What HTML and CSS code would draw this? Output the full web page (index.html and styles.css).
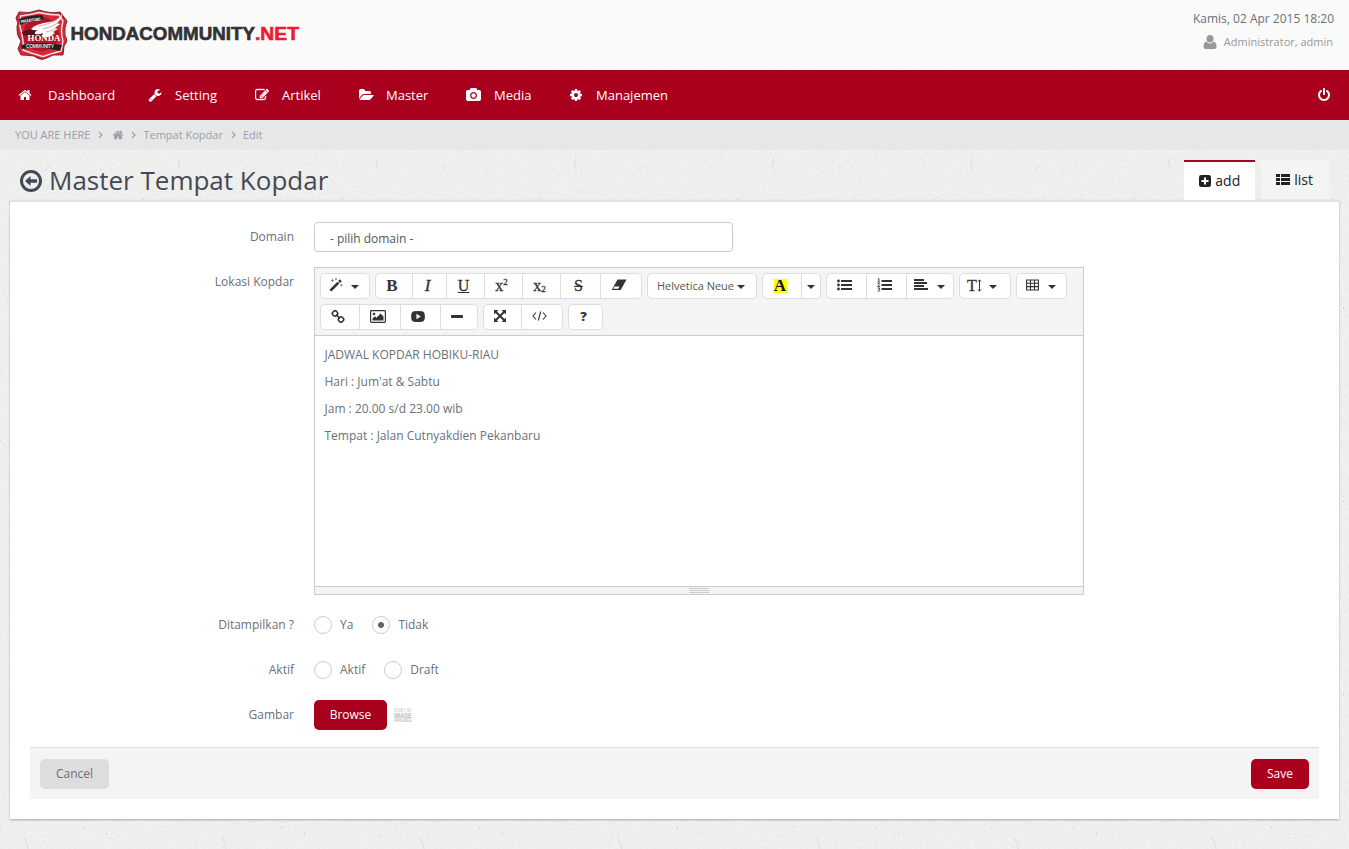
FILE: index.html
```
<!DOCTYPE html>
<html lang="id">
<head>
<meta charset="utf-8">
<title>Master Tempat Kopdar</title>
<link rel="stylesheet" href="styles.css">
</head>
<body>
<svg class="defs" width="0" height="0" aria-hidden="true">
  <symbol id="home" viewBox="0 0 1792 1792"><path d="M1472 992v480q0 26-19 45t-45 19h-384v-384h-256v384h-384q-26 0-45-19t-19-45v-480q0-1 .5-3t.5-3l575-474 575 474q1 2 1 6zm223-69l-62 74q-8 9-21 11h-3q-13 0-21-7l-692-577-692 577q-12 8-24 7-13-2-21-11l-62-74q-8-10-7-23.5t11-21.5l719-599q32-26 76-26t76 26l244 204v-195q0-14 9-23t23-9h192q14 0 23 9t9 23v408l219 182q10 8 11 21.5t-7 23.5z"/></symbol>
  <symbol id="wrench" viewBox="0 0 1792 1792"><path d="M448 1472q0-26-19-45t-45-19-45 19-19 45 19 45 45 19 45-19 19-45zm644-420l-682 682q-37 37-90 37-52 0-91-37l-106-108q-38-36-38-90 0-53 38-91l681-681q39 98 114.5 173.5t173.5 114.5zm634-435q0 39-23 106-47 134-164.5 217.5t-258.5 83.5q-185 0-316.5-131.5t-131.5-316.5 131.5-316.5 316.5-131.5q58 0 121.5 16.5t107.5 46.5q16 11 16 28t-16 28l-293 169v224l193 107q5-3 79-48.5t135.5-81 70.5-35.5q15 0 23.5 10t8.5 25z"/></symbol>
  <symbol id="edit" viewBox="0 0 1792 1792"><path d="M888 1184l116-116-152-152-116 116v56h96v96h56zm440-720q-16-16-33 1l-350 350q-17 17-1 33t33-1l350-350q17-17 1-33zm80 594v190q0 119-84.5 203.5t-203.5 84.5h-832q-119 0-203.5-84.5t-84.5-203.5v-832q0-119 84.5-203.5t203.5-84.5h832q63 0 117 25 15 7 18 23 3 17-9 29l-49 49q-14 14-32 8-23-6-45-6h-832q-66 0-113 47t-47 113v832q0 66 47 113t113 47h832q66 0 113-47t47-113v-126q0-13 9-22l64-64q15-15 35-7t20 29zm-96-738l288 288-672 672h-288v-288zm444 132l-92 92-288-288 92-92q28-28 68-28t68 28l152 152q28 28 28 68t-28 68z"/></symbol>
  <symbol id="folder" viewBox="0 0 1920 1792"><path d="M1879 952q0 31-31 66l-336 396q-43 51-120.5 86.5t-143.5 35.5h-1088q-34 0-60.5-13t-26.5-43q0-31 31-66l336-396q43-51 120.5-86.5t143.5-35.5h1088q34 0 60.5 13t26.5 43zm-343-344v160h-832q-94 0-197 47.5t-164 119.5l-337 396-5 6q0-4-.5-12.5t-.5-12.5v-960q0-92 66-158t158-66h320q92 0 158 66t66 158v32h544q92 0 158 66t66 158z"/></symbol>
  <symbol id="camera" viewBox="0 0 1920 1792"><path d="M960 672q119 0 203.5 84.5t84.5 203.5-84.5 203.5-203.5 84.5-203.5-84.5-84.5-203.5 84.5-203.5 203.5-84.5zm704-416q106 0 181 75t75 181v896q0 106-75 181t-181 75h-1408q-106 0-181-75t-75-181v-896q0-106 75-181t181-75h224l51-136q19-49 69.5-84.5t103.5-35.5h512q53 0 103.5 35.5t69.5 84.5l51 136h224zm-704 1152q185 0 316.5-131.5t131.5-316.5-131.5-316.5-316.5-131.5-316.5 131.5-131.5 316.5 131.5 316.5 316.5 131.5z"/></symbol>
  <symbol id="gear" viewBox="0 0 1792 1792"><path d="M1152 896q0-106-75-181t-181-75-181 75-75 181 75 181 181 75 181-75 75-181zm512-109v222q0 12-8 23t-20 13l-185 28q-19 54-39 91 35 50 107 138 10 12 10 25t-9 23q-27 37-99 108t-94 71q-12 0-26-9l-138-108q-44 23-91 38-16 136-29 186-7 28-36 28h-222q-14 0-24.5-8.5t-11.5-21.5l-28-184q-49-16-90-37l-141 107q-10 9-25 9-14 0-25-11-126-114-165-168-7-10-7-23 0-12 8-23 15-21 51-66.5t54-70.5q-27-50-41-99l-183-27q-13-2-21-12.5t-8-23.5v-222q0-12 8-23t19-13l186-28q14-46 39-92-40-57-107-138-10-12-10-24 0-10 9-23 26-36 98.5-107.5t94.5-71.5q13 0 26 10l138 107q44-23 91-38 16-136 29-186 7-28 36-28h222q14 0 24.5 8.5t11.5 21.5l28 184q49 16 90 37l142-107q9-9 24-9 13 0 25 10 129 119 165 170 7 8 7 22 0 12-8 23-15 21-51 66.5t-54 70.5q26 50 41 98l183 28q13 2 21 12.5t8 23.5z"/></symbol>
  <symbol id="power" viewBox="0 0 1792 1792"><path d="M1664 896q0 156-61 298t-164 245-245 164-298 61-298-61-245-164-164-245-61-298q0-182 80.5-343t226.5-270q43-32 95.5-25t83.5 50q32 42 24.5 94.5t-49.5 84.5q-98 74-151.5 181t-53.5 228q0 104 40.5 198.5t109.5 163.5 163.5 109.5 198.5 40.5 198.5-40.5 163.5-109.5 109.5-163.5 40.5-198.5q0-121-53.5-228t-151.5-181q-42-32-49.5-84.5t24.5-94.5q31-43 84-50t95 25q146 109 226.5 270t80.5 343zm-640-768v640q0 52-38 90t-90 38-90-38-38-90v-640q0-52 38-90t90-38 90 38 38 90z"/></symbol>
  <symbol id="chev" viewBox="0 0 5 8"><path d="M1 1l3 3-3 3" fill="none" stroke="currentColor" stroke-width="1.1"/></symbol>
</svg>
<svg class="paper" aria-hidden="true">
  <filter id="grain" x="0" y="0" width="100%" height="100%">
    <feTurbulence type="fractalNoise" baseFrequency=".35" numOctaves="3" seed="4" stitchTiles="stitch"/>
    <feColorMatrix values="0 0 0 0 .45  0 0 0 0 .44  0 0 0 0 .42  .2 .1 0 0 -.125"/>
  </filter>
  <pattern id="fibres" width="198" height="193" patternUnits="userSpaceOnUse">
    <path d="M24 65q3 6 5 15M93 19l3-4M142 8l3-4M71 119l-5 6M180 158q-3 7 1 12M120 92l6-3M45 171l4-6M0 55h2M195 140l3 2" fill="none" stroke="#8b8984" stroke-opacity=".25" stroke-width=".7"/>
    <path d="M106 61h1v1h-1zM83 55h1v1h-1zM12 142h1v1h-1zM155 115h1v1h-1zM92 77h1v1h-1z" fill="#777" fill-opacity=".45"/>
  </pattern>
  <rect width="100%" height="100%" filter="url(#grain)"/>
  <rect width="100%" height="100%" fill="url(#fibres)"/>
</svg>

<header class="top">
  <svg class="logo" width="290" height="54" viewBox="0 0 290 54">
    <path d="M4 3Q14 5 24 1Q36 5 45 3L52 12Q49 18 50 27Q54 31 49 37L48 46L38 46Q33 49 27 50.500Q21 49 19 47Q11 46 6 46L3 40L6 32Q1 26 2 18Q4 14 1 9Z" fill="#d42a3b" stroke="#6d1621" stroke-width=".9"/>
    <path d="M5.500 7Q15 6 24 3.500Q35 6 44 6L48 12Q45 22 48 32L46 42Q35 45 28 47.500Q18 45 8 41Q9 30 5 18Z" fill="none" stroke="#fff" stroke-opacity=".85" stroke-width="1.400"/>
    <ellipse cx="26" cy="25" rx="18" ry="17" fill="#b21526"/>
    <ellipse cx="23" cy="24" rx="16" ry="4" fill="#54131c"/>
    <path d="M4 10Q15 6 27 6L29 10Q16 11 5 16Z" fill="#222"/>
    <text x="6" y="14" class="badge-sm" fill="#eee" textLength="20" transform="rotate(-8 6 14)">PROUD TO BE</text>
    <path d="M47 5Q43 12 34 13Q20 15 16 20Q19 22 23 21Q19 23 20 25Q24 26 28 24Q26 27 29 28Q34 29 40 24L38 23L43 20L40 19L45 15L42 14Q47 10 47 5Z" fill="#fff"/>
    <path d="M45 8Q37 15 24 17M43 14Q37 18 28 20M42 19Q38 22 31 23" fill="none" stroke="#c9858b" stroke-width=".7"/>
    <text x="12.500" y="31.500" class="badge-name" fill="#fff" textLength="33" lengthAdjust="spacingAndGlyphs">HONDA</text>
    <path d="M6 36Q26 32 47 36L45 42Q26 36 7 40Z" fill="#242021"/>
    <text x="11" y="39" class="badge-md" fill="#ddd" textLength="28">COMMUNITY</text>
    <text x="55.500" y="31" class="wordmark" fill="#333" stroke="#333" textLength="184.500" lengthAdjust="spacingAndGlyphs">HONDACOMMUNITY</text>
    <text x="240" y="31" class="wordmark" fill="#ee1c2e" stroke="#ee1c2e" textLength="44" lengthAdjust="spacingAndGlyphs">.NET</text>
  </svg>
  <div class="session">
    <div class="date">Kamis, 02 Apr 2015 18:20</div>
    <div class="user"><svg width="14" height="14" viewBox="0 0 14 14"><ellipse cx="7" cy="3.800" rx="3.500" ry="3.800"/><path d="M3.300 6.500Q5 8.500 7 8.500T10.700 6.500Q13.500 7 13.500 12Q13.300 14 11.500 14H2.500Q.700 14 .5 12Q.500 7 3.300 6.500Z"/></svg>Administrator, admin</div>
  </div>
</header>

<nav class="nav">
  <a class="n1"><svg class="fa"><use href="#home"/></svg>Dashboard</a>
  <a class="n2"><svg class="fa"><use href="#wrench"/></svg>Setting</a>
  <a class="n3"><svg class="fa bold-icon"><use href="#edit"/></svg>Artikel</a>
  <a class="n4"><svg class="fa wide"><use href="#folder"/></svg>Master</a>
  <a class="n5"><svg class="fa wide"><use href="#camera"/></svg>Media</a>
  <a class="n6"><svg class="fa"><use href="#gear"/></svg>Manajemen</a>
  <a class="logout"><svg class="fa"><use href="#power"/></svg></a>
</nav>

<div class="crumbs">
  <span>YOU ARE HERE</span><svg class="chev"><use href="#chev"/></svg><svg class="crumb-home"><use href="#home"/></svg><svg class="chev"><use href="#chev"/></svg><span>Tempat Kopdar</span><svg class="chev"><use href="#chev"/></svg><span>Edit</span>
</div>

<main>
  <div class="heading">
    <svg width="22" height="22" viewBox="0 0 22 22"><circle cx="11" cy="11" r="9.500" fill="none" stroke="currentColor" stroke-width="3"/><path d="M5 11l5.500-5v3.200H17v3.600h-6.500V16z" fill="currentColor"/></svg>
    <h1>Master Tempat Kopdar</h1>
    <div class="tabs">
      <a class="tab active"><svg width="12" height="12" viewBox="0 0 12 12"><rect width="12" height="12" rx="2.300"/><path d="M6 2.500v7M2.500 6h7" stroke="#fff" stroke-width="2"/></svg>add</a>
      <a class="tab"><svg width="14" height="11" viewBox="0 0 14 11"><path d="M0 0h4v3H0zM5 0h9v3H5zM0 4h4v3H0zM5 4h9v3H5zM0 8h4v3H0zM5 8h9v3H5z"/></svg>list</a>
    </div>
  </div>

  <section class="panel">
    <div class="row"><label>Domain</label><div class="select">- pilih domain -</div></div>
    <div class="row">
      <label>Lokasi Kopdar</label>
      <div class="editor">
        <div class="toolbar">
          <div class="group">
            <b style="width:48px"><svg width="14" height="14" viewBox="0 0 14 14"><path d="M.5 11.700L8.500 3.700l1.900 1.900-8 8zM9.200 3l1.700-1.700 1.900 1.900-1.700 1.700z"/><path d="M3.500 1v3M2 2.500h3M7 0v2M6 1h2M12.500 6v2.500M11.200 7.200h2.600" stroke="#777" stroke-width=".8"/></svg><i class="caret"></i></b>
          </div>
          <div class="group">
            <b class="serif bold" style="width:36px">B</b><b class="serif ital" style="width:33px">I</b><b class="serif under" style="width:37px">U</b><b class="serif" style="width:37px">x<sup>2</sup></b><b class="serif" style="width:37px">x<sub>2</sub></b><b class="serif strike" style="width:39px">S</b><b style="width:40px"><svg width="16" height="12" viewBox="0 0 16 12"><path d="M6.500.500h9l-5.800 10.500h-9z"/><path d="M3.500 7.500h5L7.300 9.800H2.200z" fill="#fff"/></svg></b>
          </div>
          <div class="group"><b class="fontname" style="width:108px">Helvetica Neue<i class="caret"></i></b></div>
          <div class="group">
            <b class="serif bold" style="width:38px"><span class="mark">A</span></b><b class="narrow" style="width:18px"><i class="caret"></i></b>
          </div>
          <div class="group">
            <b style="width:39px"><svg width="15" height="12" viewBox="0 0 15 12"><path d="M4 1h11v2H4zM4 5h11v2H4zM4 9h11v2H4z"/><circle cx="1.500" cy="2" r="1.400"/><circle cx="1.500" cy="6" r="1.400"/><circle cx="1.500" cy="10" r="1.400"/></svg></b>
            <b style="width:39px"><svg width="15" height="14" viewBox="0 0 15 14"><path d="M4.500 2H15v2H4.500zM4.500 6H15v2H4.500zM4.500 10H15v2H4.500z"/><path d="M.8 1.200L1.900.6v3.200M.6 4h2.500M.6 5.600q2-.8 2 .6L.7 8.400h2.400M.6 10h2.200L1.700 11.300q1.300.1 1.100 1.200-.5 1-2.200.5" fill="none" stroke="currentColor" stroke-width=".9"/></svg></b>
            <b class="duo" style="width:46px"><svg width="14" height="12" viewBox="0 0 14 12"><path d="M0 0h10v2H0zM0 3h13v2H0zM0 6h10v2H0zM0 9h14v2H0z"/></svg><i class="caret"></i></b>
          </div>
          <div class="group"><b class="serif height" style="width:50px">T<svg width="5" height="13" viewBox="0 0 5 13"><path d="M2.500 1v11M1 2.500L2.500.800 4 2.500M1 10.500l1.500 1.700L4 10.500" fill="none" stroke="currentColor"/></svg><i class="caret"></i></b></div>
          <div class="group"><b class="duo" style="width:49px"><svg width="13" height="12" viewBox="0 0 13 12"><path d="M.6 1h11.800v10H.6zM.6 4.300h11.800M.6 7.600h11.800M4.500 1v10M8.500 1v10" fill="none" stroke="currentColor" stroke-width="1.100"/></svg><i class="caret"></i></b></div>
          <div class="group">
            <b style="width:38px"><svg width="14" height="13" viewBox="0 0 14 13"><g fill="none" stroke="currentColor" stroke-width="1.600"><rect x="1.500" y="1" width="5" height="5" rx="2.200" transform="rotate(45 4 3.500)"/><rect x="7.500" y="7" width="5" height="5" rx="2.200" transform="rotate(45 10 9.500)"/><path d="M5 4.500l4 4"/></g></svg></b>
            <b style="width:40px"><svg width="16" height="13" viewBox="0 0 16 13"><rect x=".6" y=".6" width="14.800" height="11.800" rx=".8" fill="none" stroke="currentColor" stroke-width="1.200"/><circle cx="4" cy="4" r="1.300"/><path d="M2.500 10.500V8.500L5 6.300l1.500 1.500L10.500 3.500l3 3v4z"/></svg></b>
            <b style="width:39px"><svg width="14" height="11" viewBox="0 0 15 12"><path fill-rule="evenodd" d="M3 .300Q7.500-.2 12 .300 15 .500 15 6T12 11.700Q7.500 12.200 3 11.700 0 11.500 0 6T3 .300ZM5.800 3v6L10.500 6z"/></svg></b>
            <b style="width:36px"><svg width="12" height="3"><rect width="12" height="3" rx=".8"/></svg></b>
          </div>
          <div class="group">
            <b style="width:37px"><svg width="12" height="12" viewBox="0 0 12 12"><path d="M0 0h4.500L0 4.500zM12 0v4.500L7.500 0zM0 12V7.500L4.500 12zM12 12H7.500L12 7.500z"/><path d="M2 2l8 8M10 2l-8 8" stroke="currentColor" stroke-width="2"/></svg></b>
            <b style="width:40px"><svg width="15" height="10" viewBox="0 0 15 10"><path d="M4 1.500L1 5l3 3.500M11 1.500L14 5l-3 3.500M8.700.500L6.300 9.500" fill="none" stroke="currentColor" stroke-width="1.100"/></svg></b>
          </div>
          <div class="group"><b class="help" style="width:29px">?</b></div>
        </div>
        <div class="content"><p>JADWAL KOPDAR HOBIKU-RIAU</p><p>Hari : Jum'at &amp; Sabtu</p><p>Jam : 20.00 s/d 23.00 wib</p><p>Tempat : Jalan Cutnyakdien Pekanbaru</p></div>
        <div class="resize"><span></span></div>
      </div>
    </div>
    <div class="row"><label>Ditampilkan ?</label><div class="radios"><i class="radio"></i><span class="opt">Ya</span><i class="radio on"></i><span class="opt">Tidak</span></div></div>
    <div class="row"><label>Aktif</label><div class="radios"><i class="radio"></i><span class="opt">Aktif</span><i class="radio"></i><span class="opt">Draft</span></div></div>
    <div class="row"><label>Gambar</label><a class="btn red browse">Browse</a>
      <svg class="thumb" width="20" height="18" viewBox="0 0 20 18"><text x="1" y="5.500" font-size="4.500" textLength="17.500" lengthAdjust="spacingAndGlyphs" opacity=".65">SORRY, NO</text><text x="1" y="11.500" font-size="7" textLength="17.500" lengthAdjust="spacingAndGlyphs">IMAGE</text><text x="1" y="15.800" font-size="4.500" textLength="17.500" lengthAdjust="spacingAndGlyphs">AVAILABLE</text></svg>
    </div>
    <div class="actions"><a class="btn grey">Cancel</a><a class="btn red save">Save</a></div>
  </section>
</main>
</body>
</html>
```

FILE: styles.css
```
* { box-sizing: border-box; }
body { margin: 0; height: 849px; overflow: hidden; position: relative; background: #f0f0ef; font: 12px/20px "Open Sans", sans-serif; color: #6b7079; }
svg { fill: currentColor; flex: none; display: block; }
.defs { position: absolute; }
.paper { position: absolute; inset: 0; width: 100%; height: 100%; z-index: -1; }

.top { height: 70px; display: flex; justify-content: space-between; padding: 9px 15px 0; background: rgba(255,255,255,.7); }
.wordmark { font: 900 18px "Liberation Sans", Arial, sans-serif; stroke-width: .6px; }
.badge-name { font: bold 8px "Liberation Serif", serif; }
.badge-sm { font: bold 4px "Liberation Sans", sans-serif; }
.badge-md { font: bold 5px "Liberation Sans", sans-serif; }
.session { text-align: right; }
.date { font-size: 12px; }
.user { display: flex; justify-content: flex-end; align-items: center; gap: 7px; margin: 3px 1px 0 0; font-size: 11px; color: #999; }

.nav { height: 50px; display: flex; align-items: center; padding: 0 0 1px 18px; background: #a9001d; box-shadow: inset 0 1px #9c0b22; color: #fff; font-size: 13px; }
.nav a { display: flex; align-items: center; }
.fa { width: 14px; height: 14px; margin-right: 16px; }
.fa.wide { width: 15px; }
.bold-icon { stroke: currentColor; stroke-width: 50; }
.n1 { width: 130px; }
.n2 { width: 107px; }
.n2 .fa { margin-right: 13px; }
.n3 { width: 104px; }
.n3 .fa, .n5 .fa { margin-right: 13px; }
.n4 { width: 107px; }
.n4 .fa { margin-right: 12px; }
.n5 { width: 103px; }
.n6 .fa { margin-right: 13px; }
.logout { margin-left: auto; }
.logout .fa { margin-right: 18px; }

.crumbs { height: 30px; display: flex; align-items: center; padding-left: 15px; background: #e7e7e7; color: #999ea8; font-size: 11px; }
.chev { width: 5px; height: 8px; margin: 0 7px 0 8px; }
.crumb-home { width: 12px; height: 12px; margin: 0 -2px 0 2px; }
.crumb-home + .chev { margin-left: 9px; }

.heading { height: 50px; display: flex; align-items: flex-start; padding: 0 10px 0 20px; color: #434a54; }
.heading > svg { margin-top: 20px; }
h1 { margin: 12px 0 0 7px; font-size: 26px; line-height: 36px; font-weight: 400; }
.tabs { display: flex; margin: 10px 10px 0 auto; gap: 6px; }
.tab { height: 39px; display: flex; align-items: center; gap: 4px; padding: 0 16px 0 15px; background: #f4f4f4; color: #222; font-size: 14px; }
.tab.active { height: 40px; padding-right: 15px; background: #fff; border-top: 2px solid #a9001d; }

.panel { margin: 0 10px; height: 619px; padding: 20px 20px 0; border-top: 2px solid #e2e2e2; background: #fff; box-shadow: 0 1px 2px rgba(0,0,0,.3); }
.row { display: flex; min-height: 30px; margin-bottom: 15px; }
.row label { width: 264px; margin: 5px 20px 0 0; text-align: right; }
.select { width: 419px; height: 30px; border: 1px solid #ccc; border-radius: 4px; padding: 6px 15px; font-size: 12px; letter-spacing: -.02px; color: #555; }
.editor { width: 770px; height: 328px; border: 1px solid #ccc; display: flex; flex-direction: column; }
.toolbar { height: 68px; display: flex; flex-wrap: wrap; align-content: flex-start; gap: 5px; padding: 5px; background: #f4f4f4; border-bottom: 1px solid #ccc; color: #333; }
.group { display: flex; height: 26px; border: 1px solid #ddd; border-radius: 5px; background: #fff; }
.group b { display: flex; align-items: center; justify-content: center; font-weight: 400; box-sizing: content-box; }
.group b + b { border-left: 1px solid #ddd; }
.group b > svg { margin: 0 5px 2px 0; }
.group .serif { font: 16px/20px "Liberation Serif", serif; text-indent: -4px; padding-bottom: 1px; -webkit-text-stroke: .3px; }
.group .bold { font-size: 17px; font-weight: bold; -webkit-text-stroke: 0; }
.group .ital { font-style: italic; font-size: 17px; }
.under { text-decoration: underline; }
.strike { text-decoration: line-through; }
.serif sup, .serif sub { font-size: 9px; line-height: 1; text-indent: 0; }
.serif sup { margin-bottom: 6px; }
.serif sub { margin-top: 8px; }
.caret { border: 4px solid transparent; border-top-color: #333; border-bottom: 0; margin: 2px 2px 0 3px; }
.group .narrow .caret { margin-left: 0; margin-right: 0; }
.group .height svg { margin: 0 4px 1px 0; }
.duo .caret { margin-left: 4px; }
.group .fontname { font-size: 11px; color: #555; }
.fontname .caret { margin-left: 3px; }
.mark { background: #ff0; width: 13px; height: 14px; line-height: 14px; text-align: center; text-indent: 0; color: #111; margin-right: 4px; }
.group .help { font-weight: 800; font-size: 13px; padding: 0 4px 2px 0; }
.content { flex: 1; padding: 9px 9px 9px 9.500px; }
.content p { margin: 0 0 7px; }
.resize { height: 8px; border-top: 1px solid #ccc; background: #f4f4f4; display: flex; justify-content: center; padding-top: 1px; }
.resize span { width: 20px; height: 5px; background: repeating-linear-gradient(#ccc 0 1px, transparent 1px 2px); }

.radios { display: flex; align-items: center; }
.radio { width: 18px; height: 18px; border: 1px solid #ccc; border-radius: 50%; }
.radio.on { background: radial-gradient(circle, #666 0 2.700px, transparent 3.300px); }
.opt { margin: 0 19px 0 8px; }
.btn { height: 30px; line-height: 30px; border-radius: 5px; text-align: center; }
.red { background: #a9001d; color: #fff; }
.browse { width: 73px; }
.thumb { margin: 6px 0 0 6px; fill: #bbb; font-family: "Liberation Sans", sans-serif; font-weight: bold; }
.actions { margin-top: 17px; height: 52px; padding: 11px 10px; display: flex; justify-content: space-between; background: #f4f4f4; border-top: 1px solid #ddd; }
.grey { width: 69px; background: #ddd; }
.save { width: 58px; }
```
